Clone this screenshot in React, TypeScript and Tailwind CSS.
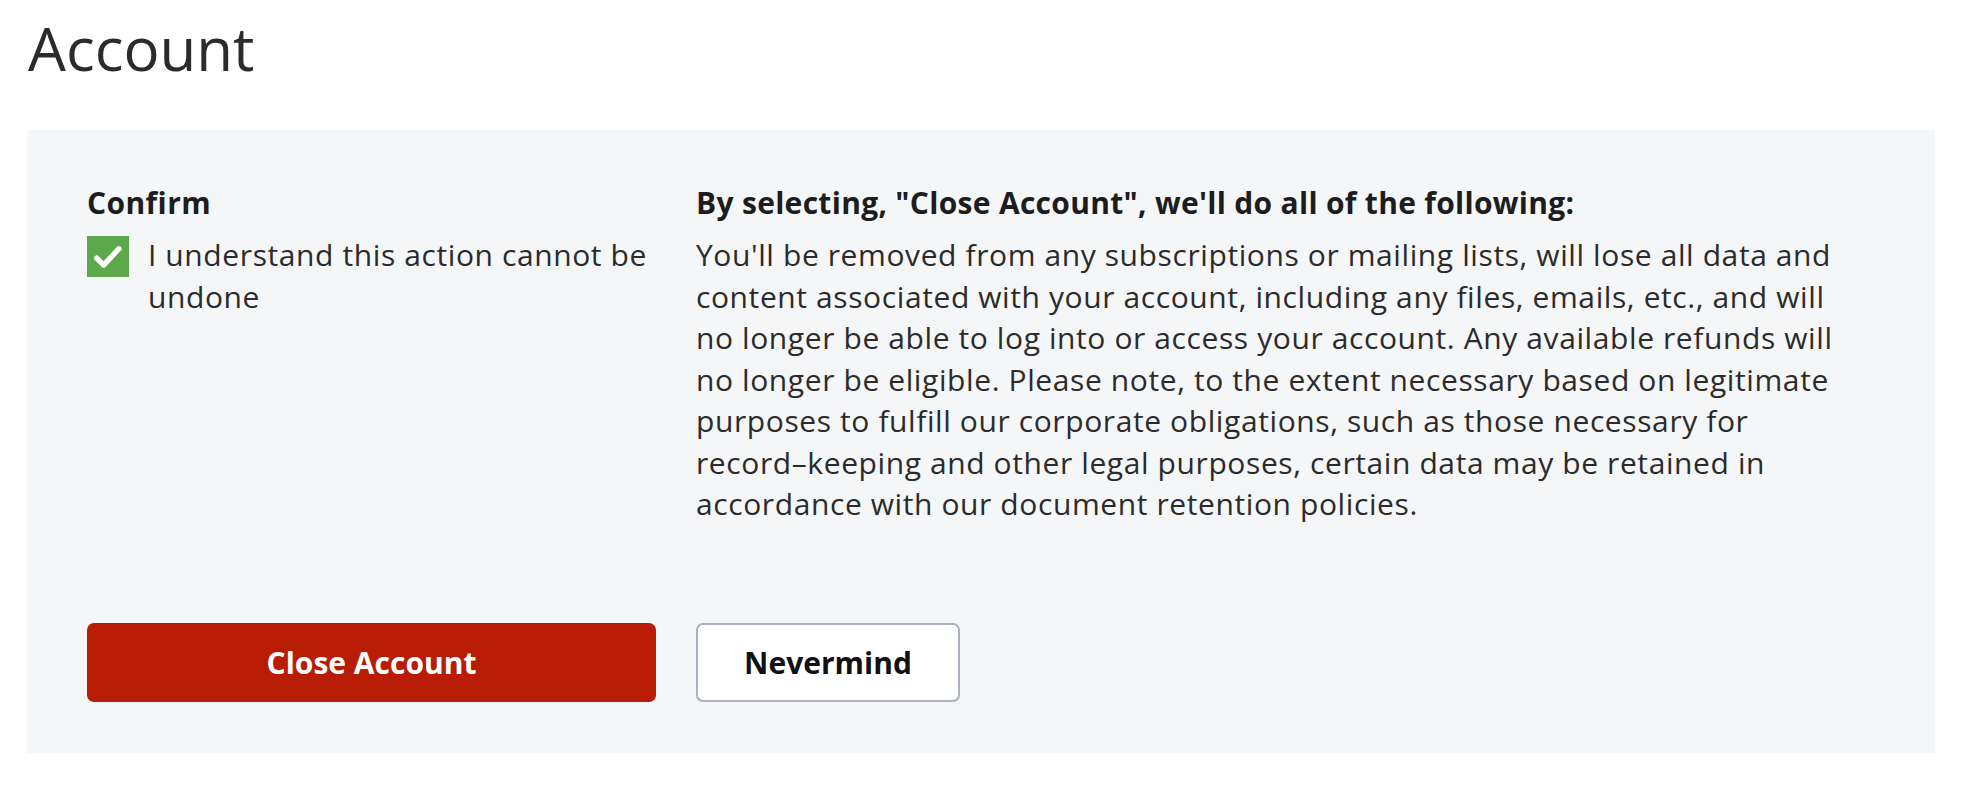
export default function App() {
  return (
    <div className="min-h-screen bg-white font-['Open_Sans',_'Liberation_Sans',_sans-serif] text-[#2b2b2b]">
      {/* Title */}
      <h1 className="ml-[28px] pt-[12px] text-[60px] leading-[72px] font-normal text-[#2b2b2b]">
        Account
      </h1>

      {/* Close account panel */}
      <section className="mt-[46px] ml-[27px] w-[1908px] bg-[#f5f6f8] px-[60px] pt-[55px] pb-[51px]">
        <div className="grid grid-cols-[569px_1fr] gap-x-[40px]">
          <div>
            <h2 className="text-[30px] leading-[36px] tracking-[0.4px] font-bold text-[#1d1d1d] mb-[13px]">
              Confirm
            </h2>
            <label className="flex items-start gap-[19px]">
              <span className="mt-[2px] w-[42px] h-[41px] shrink-0 bg-[#5ca84a] flex items-center justify-center">
                <svg viewBox="0 0 24 24" className="w-[36px] h-[36px]" fill="none">
                  <path
                    d="M4.5 12.8l4.6 4.6L19.2 6.5"
                    stroke="white"
                    strokeWidth="3.6"
                    strokeLinecap="round"
                    strokeLinejoin="round"
                  />
                </svg>
              </span>
              <span className="text-[30px] leading-[41.5px] tracking-[0.6px]">
                I understand this action cannot be undone
              </span>
            </label>
          </div>

          <div>
            <h2 className="text-[30px] leading-[36px] tracking-[0.3px] font-bold text-[#1d1d1d] mb-[13px]">
              By selecting, "Close Account", we'll do all of the following:
            </h2>
            <p className="text-[30px] leading-[41.5px] tracking-[0.6px] pr-[20px]">
              You'll be removed from any subscriptions or mailing lists, will
              lose all data and content associated with your account, including
              any files, emails, etc., and will no longer be able to log into or
              access your account. Any available refunds will no longer be
              eligible. Please note, to the extent necessary based on legitimate
              purposes to fulfill our corporate obligations, such as those
              necessary for record–keeping and other legal purposes, certain data
              may be retained in accordance with our document retention policies.
            </p>
          </div>
        </div>

        <div className="mt-[98px] grid grid-cols-[569px_1fr] gap-x-[40px]">
          <button className="h-[79px] rounded-[7px] bg-[#b81c04] text-white text-[30px] font-bold">
            Close Account
          </button>
          <div>
            <button className="h-[79px] w-[264px] rounded-[7px] border-2 border-[#aab0bd] bg-white text-[#111111] text-[30px] font-bold">
              Nevermind
            </button>
          </div>
        </div>
      </section>
    </div>
  );
}
